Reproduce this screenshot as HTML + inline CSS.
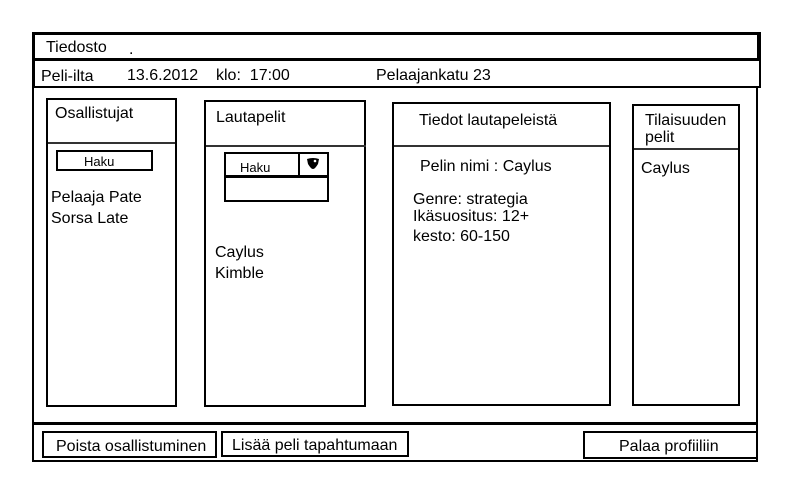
<!DOCTYPE html>
<html><head><meta charset="utf-8"><style>
body{margin:0;width:800px;height:500px;background:#fff;position:relative;overflow:hidden;font-family:"Liberation Sans",Arial,sans-serif;color:#000}
.a{position:absolute;box-sizing:border-box}
.b{border:2px solid #000}
.t{position:absolute;font-size:16px;white-space:nowrap;line-height:16px;margin-top:2px}
.h{position:absolute;left:0;right:0;border-top:2px solid #000}
</style></head><body>
<div class="a" style="left:32px;top:32px;width:729px;height:29px;border:3px solid #000;border-right-width:4px"></div>
<div class="t" style="left:46px;top:38px">Tiedosto</div>
<div class="t" style="left:129px;top:40px">.</div>
<div class="a" style="left:32px;top:58px;width:729px;height:30px;border-left:3px solid #000;border-right:2px solid #000;border-bottom:2px solid #000"></div>
<div class="t" style="left:41px;top:67px">Peli-ilta</div>
<div class="t" style="left:127px;top:66px">13.6.2012</div>
<div class="t" style="left:216px;top:66px">klo:&nbsp; 17:00</div>
<div class="t" style="left:376px;top:66px">Pelaajankatu 23</div>
<div class="a" style="left:32px;top:86px;width:726px;height:376px;border-left:2px solid #000;border-right:2px solid #000;border-bottom:2px solid #000"></div>
<div class="a" style="left:32px;top:422px;width:726px;height:3px;background:#000"></div>
<div class="a b" style="left:46px;top:98px;width:131px;height:309px"><div class="h" style="top:42px;border-top-color:#333"></div></div>
<div class="t" style="left:55px;top:104px">Osallistujat</div>
<div class="a b" style="left:56px;top:150px;width:97px;height:21px"></div>
<div class="t" style="left:84px;top:152px;font-size:13px">Haku</div>
<div class="t" style="left:51px;top:188px">Pelaaja Pate</div>
<div class="t" style="left:51px;top:209px">Sorsa Late</div>
<div class="a b" style="left:204px;top:100px;width:162px;height:307px"><div class="h" style="top:43px;right:-2px;border-top-color:#333"></div></div>
<div class="t" style="left:216px;top:108px">Lautapelit</div>
<div class="a b" style="left:224px;top:152px;width:105px;height:50px"></div>
<div class="a" style="left:224px;top:175px;width:105px;height:3px;background:#000"></div>
<div class="a" style="left:298px;top:152px;width:2px;height:24px;background:#000"></div>
<svg class="a" style="left:306px;top:157px" width="14" height="13" viewBox="0 0 14 13"><path d="M1 2 Q7 0 13 2 L12 7 Q9 12 7 12 Q5 12 2 7 Z" fill="#000"/><circle cx="9" cy="4" r="1.3" fill="#fff"/></svg>
<div class="t" style="left:240px;top:158px;font-size:13px">Haku</div>
<div class="t" style="left:215px;top:243px">Caylus</div>
<div class="t" style="left:215px;top:264px">Kimble</div>
<div class="a b" style="left:392px;top:102px;width:219px;height:304px"><div class="h" style="top:41px;border-top-color:#333"></div></div>
<div class="t" style="left:419px;top:111px">Tiedot lautapeleistä</div>
<div class="t" style="left:420px;top:157px">Pelin nimi : Caylus</div>
<div class="t" style="left:413px;top:190px">Genre: strategia</div>
<div class="t" style="left:413px;top:207px">Ikäsuositus: 12+</div>
<div class="t" style="left:413px;top:227px">kesto: 60-150</div>
<div class="a b" style="left:632px;top:104px;width:108px;height:302px"><div class="h" style="top:42px;border-top-color:#333"></div></div>
<div class="t" style="left:645px;top:111px">Tilaisuuden</div>
<div class="t" style="left:645px;top:128px">pelit</div>
<div class="t" style="left:641px;top:159px">Caylus</div>
<div class="a b" style="left:42px;top:431px;width:175px;height:27px"></div>
<div class="t" style="left:56px;top:437px">Poista osallistuminen</div>
<div class="a b" style="left:221px;top:431px;width:188px;height:26px"></div>
<div class="t" style="left:232px;top:436px">Lisää peli tapahtumaan</div>
<div class="a b" style="left:583px;top:431px;width:175px;height:28px"></div>
<div class="t" style="left:619px;top:437px">Palaa profiiliin</div>
</body></html>
